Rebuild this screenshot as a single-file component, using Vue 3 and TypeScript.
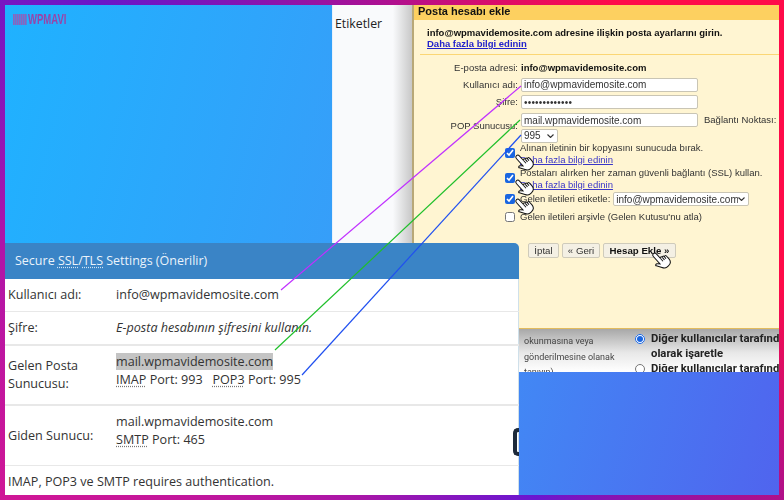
<script setup lang="ts">
interface Hand { id: number; x: number; y: number }
const hands: Hand[] = [
  { id: 1, x: 514, y: 151 },
  { id: 2, x: 514, y: 176 },
  { id: 3, x: 514, y: 195 },
  { id: 4, x: 651, y: 249 },
]
const hand = 'M8 1c1 0 2 1 2 2v6c0-1 2-1 2 0v1c0-1 2-1 2 0v1c0-1 2-1 2 0v4c0 3-2 5-5 5H9c-2 0-3-1-4-3L2 12c-1-1 1-2 2-1l2 2V3c0-1 1-2 2-2z'
</script>

<template>
  <div class="frame">
    <div class="stage">
      <div class="logo"><span class="bars"></span><span class="logo-text">WPMAVI</span></div>

      <aside class="labels"><span>Etiketler</span></aside>

      <section class="mail-window">
        <h1 class="mail-title">Posta hesabı ekle</h1>
        <div class="intro">
          <p>info@wpmavidemosite.com adresine ilişkin posta ayarlarını girin.</p>
          <a href="#">Daha fazla bilgi edinin</a>
        </div>
        <div class="form">
          <label>E-posta adresi:</label><b>info@wpmavidemosite.com</b>
          <label>Kullanıcı adı:</label><input class="field" value="info@wpmavidemosite.com" />
          <label>Şifre:</label><input class="field pass" type="password" value="•••••••••••••" />
          <label class="pop">POP Sunucusu:</label>
          <div class="pop-row"><input class="field" value="mail.wpmavidemosite.com" /><span>Bağlantı Noktası:</span></div>
          <span></span><select class="port"><option>995</option></select>
        </div>
        <div class="checks">
          <input type="checkbox" checked />
          <div class="check-text"><span>Alınan iletinin bir kopyasını sunucuda bırak.</span><a href="#">Daha fazla bilgi edinin</a></div>
          <input type="checkbox" checked />
          <div class="check-text"><span>Postaları alırken her zaman güvenli bağlantı (SSL) kullan.</span><a href="#">Daha fazla bilgi edinin</a></div>
          <input type="checkbox" checked />
          <div class="label-row"><span>Gelen iletileri etiketle:</span><select class="tag"><option>info@wpmavidemosite.com</option></select></div>
          <input type="checkbox" />
          <div class="archive">Gelen iletileri arşivle (Gelen Kutusu'nu atla)</div>
        </div>
        <div class="actions">
          <button class="b-cancel">İptal</button><button class="b-back">« Geri</button><button class="primary">Hesap Ekle »</button>
        </div>
      </section>

      <section class="fragment">
        <div class="frag-left">okunmasına veya<br />gönderilmesine olanak<br />tanıyın)</div>
        <div class="frag-right">
          <input type="radio" name="r" checked />
          <div>Diğer kullanıcılar tarafından<br />olarak işaretle</div>
          <input type="radio" name="r" />
          <div>Diğer kullanıcılar tarafından</div>
        </div>
      </section>

      <section class="card">
        <header>Secure <abbr>SSL</abbr>/<abbr>TLS</abbr> Settings (Önerilir)</header>
        <div class="row r1"><div class="key">Kullanıcı adı:</div><div>info@wpmavidemosite.com</div></div>
        <div class="row r2"><div class="key">Şifre:</div><div><em>E-posta hesabının şifresini kullanın.</em></div></div>
        <div class="row r3">
          <div class="key">Gelen Posta Sunucusu:</div>
          <div class="top"><mark>mail.wpmavidemosite.com</mark><br /><abbr>IMAP</abbr> Port: 993 &nbsp; <abbr>POP3</abbr> Port: 995</div>
        </div>
        <div class="row r4">
          <div class="key">Giden Sunucu:</div>
          <div class="top">mail.wpmavidemosite.com<br /><abbr>SMTP</abbr> Port: 465</div>
        </div>
        <div class="note">IMAP, POP3 ve SMTP requires authentication.</div>
        <span class="edge"></span>
      </section>

      <svg class="overlay" width="784" height="500" viewBox="0 0 784 500" fill="none">
        <line x1="281" y1="290" x2="521" y2="86" stroke="#c030ff" stroke-width="1.2" />
        <line x1="275" y1="350" x2="520" y2="120" stroke="#1fbf2a" stroke-width="1.2" />
        <line x1="302" y1="375" x2="521" y2="135" stroke="#2050f0" stroke-width="1.2" />
        <g v-for="h in hands" :key="h.id" :transform="`translate(${h.x} ${h.y}) rotate(-42 10 10)`">
          <path :d="hand" fill="#fff" stroke="#111" stroke-width="1" />
          <path d="M10 9v4M12 10v3M14 11v2" stroke="#111" stroke-width="1" />
        </g>
      </svg>
    </div>
  </div>
</template>

<style>
html, body { margin: 0; padding: 0; }
</style>

<style scoped>
.frame {
  width: 784px;
  height: 500px;
  box-sizing: border-box;
  padding: 5px;
  overflow: hidden;
  background: conic-gradient(from 0deg at 392px 250px, #b0108f 0deg, #ff0a4a 42deg, #ff0a48 95deg, #a81090 125deg, #6a16d0 150deg, #a816a8 187deg, #cf1696 237deg, #b015a8 270deg, #6a16c8 310deg, #b0108f 360deg);
}
.stage {
  position: relative;
  width: 774px;
  height: 490px;
  overflow: hidden;
  font-family: "Open Sans", sans-serif;
  background: linear-gradient(105deg, #1fb2ff 0%, #3a9bf8 50%, #5064ee 100%);
}
.logo {
  position: absolute;
  left: 8px;
  top: 9px;
  display: flex;
  align-items: center;
  gap: 1px;
  height: 11px;
  opacity: .75;
}
.bars {
  width: 14px;
  height: 11px;
  background: repeating-linear-gradient(90deg, #b04aa8 0 1px, #6e72cc 1px 2px);
}
.logo-text {
  display: inline-block;
  transform: scaleX(.68);
  transform-origin: left center;
  width: 35px;
  font: 700 14px/11px "Liberation Sans", sans-serif;
  color: #c0208c;
  white-space: nowrap;
}
.labels {
  position: absolute;
  left: 327px;
  top: 0;
  width: 80px;
  height: 238px;
  box-sizing: border-box;
  padding: 10px 0 0 3px;
  font-size: 12.3px;
  line-height: 18px;
  color: #222;
  background: linear-gradient(90deg, #d8e8fa 0, #f9fafc 1px, #f9fafc 76%, #c8c8c8 100%);
}
.mail-window {
  position: absolute;
  left: 407px;
  top: 0;
  width: 367px;
  height: 324px;
  box-sizing: border-box;
  border-left: 2px solid #b8a878;
  border-bottom: 1px solid #e2bb5c;
  background: #fff5d2;
  font: 9.5px/12px "Liberation Sans", sans-serif;
  color: #333;
  filter: blur(.3px);
}
.mail-title {
  margin: 0;
  height: 15px;
  padding-left: 4px;
  font: 700 11px/13px "Liberation Sans", sans-serif;
  color: #111;
  background: #fdd060;
}
.intro {
  margin-left: 6px;
  padding: 7px 0 4px 7px;
  border-bottom: 1px solid #fbd675;
  font-weight: 700;
  color: #111;
}
.intro p { margin: 0; height: 11px; line-height: 12px; }
.intro a { color: #2222cc; line-height: 12px; display: block; }
a { color: #3a36c8; text-decoration: underline; }
.form {
  display: grid;
  grid-template-columns: 104px 1fr;
  column-gap: 3px;
  align-items: center;
  grid-template-rows: 16px 17px 18px 18px 13px;
  margin-top: 5px;
}
.form label { text-align: right; }
.form b { color: #111; }
.field {
  width: 177px;
  height: 14px;
  box-sizing: border-box;
  border: 1px solid #c9c5b5;
  border-radius: 2px;
  padding: 0 2px;
  background: #fff;
  font: 10px "Liberation Sans", sans-serif;
  color: #333;
  outline: none;
}
.pass { letter-spacing: .2px; }
.pop { padding-top: 12px; }
.pop-row { display: flex; align-items: center; gap: 6px; white-space: nowrap; }
.port, .tag {
  appearance: none;
  height: 14px;
  box-sizing: border-box;
  padding: 0 10px 0 2px;
  border: 1px solid #c9c5b5;
  border-radius: 2px;
  background: #fff url("data:image/svg+xml,%3Csvg xmlns='http://www.w3.org/2000/svg' width='7' height='4' fill='none' stroke='%23333' stroke-width='1.1'%3E%3Cpath d='M.5.5l3 3 3-3'/%3E%3C/svg%3E") no-repeat right 3px center;
  font: 10px "Liberation Sans", sans-serif;
  color: #333;
}
.port { width: 37px; }
.tag { width: 136px; margin-left: 3px; }
.checks {
  display: grid;
  grid-template-columns: 9px 1fr;
  column-gap: 6px;
  grid-template-rows: 25px 21px 18px 18px;
  margin: 1px 0 0 91px;
  align-items: start;
}
.checks input { margin: 5px 0 0; width: 10px; height: 10px; accent-color: #1a66e0; }
.check-text { display: flex; flex-direction: column; margin-top: -1px; }
.check-text span, .check-text a { height: 11.5px; line-height: 12px; }
.label-row { display: flex; align-items: center; height: 14px; margin-top: 3px; }
.archive { margin-top: 4px; }
.actions {
  display: flex;
  gap: 3px;
  margin: 18px 0 0 114px;
}
.actions button {
  height: 15px;
  padding: 0;
  border: 1px solid #cfcbbb;
  border-radius: 2px;
  background: #f4f0e4;
  font: 9.7px/13px "Liberation Sans", sans-serif;
  color: #333;
}
.actions .b-cancel { width: 31px; }
.actions .b-back { width: 38px; }
.actions .primary { font-weight: 700; color: #111; width: 73px; }
.fragment {
  position: absolute;
  left: 514px;
  top: 324px;
  width: 260px;
  height: 43px;
  overflow: hidden;
  display: flex;
  background: linear-gradient(180deg, #a8a8a8 0, #e8e8e8 55%, #fff 100%);
  filter: blur(.3px);
}
.frag-left {
  width: 116px;
  flex: none;
  padding: 5px 0 0 5px;
  box-sizing: border-box;
  font: 9px/15.5px Roboto, sans-serif;
  color: #444;
  white-space: nowrap;
}
.frag-right {
  display: grid;
  grid-template-columns: 10px 1fr;
  column-gap: 6px;
  font: 700 11.3px/15px Roboto, sans-serif;
  color: #222;
  white-space: nowrap;
  padding-top: 2px;
}
.frag-right input { margin: 3px 0 0; width: 10px; height: 10px; accent-color: #1a66e0; }
.card {
  position: absolute;
  left: 0;
  top: 238px;
  width: 514px;
  height: 252px;
  background: #fff;
  border-top-right-radius: 5px;
  overflow: hidden;
  font-size: 12.6px;
  line-height: 18px;
  color: #333;
  box-shadow: inset -1px 0 0 #cfe0ea;
}
.card header {
  height: 36px;
  box-sizing: border-box;
  padding: 9px 0 0 10px;
  background: #3a84c6;
  color: #eaf3fb;
  font-size: 12.5px;
}
abbr { text-decoration: underline dotted #777; text-underline-offset: 2px; }
.card header abbr { text-decoration-color: #cfe3f3; }
.row {
  display: grid;
  grid-template-columns: 108px 1fr;
  align-items: center;
  padding-left: 3px;
  border-bottom: 1px solid #e8e8e8;
  box-sizing: border-box;
}
.key { width: 96px; }
.top { align-self: start; padding-top: 7px; }
.r1 { height: 33px; }
.r2 { height: 34px; border-bottom-width: 2px; }
.r3 { height: 60px; border-bottom-width: 2px; }
.r4 { height: 60px; }
.note { padding: 7px 0 0 3px; }
mark { background: #c4c4c4; color: inherit; }
.edge {
  position: absolute;
  right: 0;
  top: 185px;
  width: 2px;
  height: 20px;
  border: 4px solid #1d2a3a;
  border-right: 0;
  border-radius: 5px 0 0 5px;
}
.overlay {
  position: absolute;
  left: -5px;
  top: -5px;
  pointer-events: none;
}
</style>
